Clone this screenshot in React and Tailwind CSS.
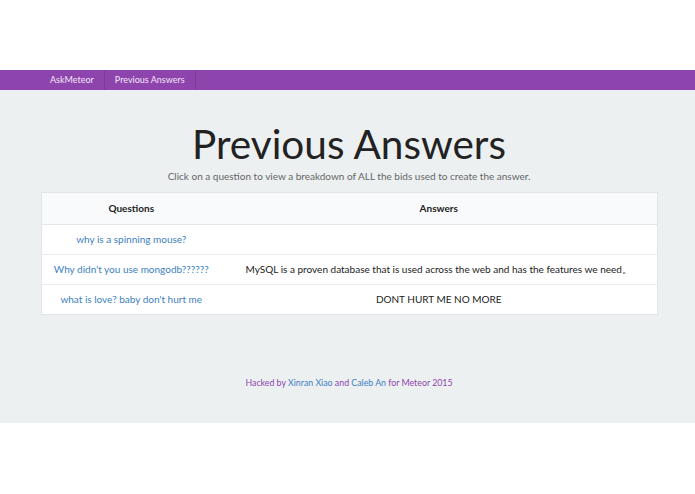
import React from 'react';

const answers = [
  { q: 'why is a spinning mouse?', a: '' },
  {
    q: "Why didn't you use mongodb??????",
    a: 'MySQL is a proven database that is used across the web and has the features we need\u3002',
  },
  { q: "what is love? baby don't hurt me", a: 'DONT HURT ME NO MORE' },
];

const App = () => {
  return (
    <div className="w-[695px] h-[494px] bg-white font-['Lato','Open_Sans',sans-serif] text-[#2c3e50]">
      <div className="h-[70px]" />

      {/* Top nav */}
      <nav className="h-[20px] bg-[#8e44ad] flex items-stretch pl-[40px] text-[9px] text-[#f3e6f8]">
        <a className="flex items-center px-[10px] border-r border-[#7d3a99]">AskMeteor</a>
        <a className="flex items-center px-[10px] border-r border-[#7d3a99]">Previous Answers</a>
      </nav>

      <main className="h-[333px] bg-[#ecf0f1] flex flex-col items-center">
        <h1 className="mt-[31px] ml-[3px] text-[40.5px] leading-[46px] text-[#222]">Previous Answers</h1>
        <p className="mt-[2px] ml-[3px] text-[10px] leading-[14px] text-[#666]">
          Click on a question to view a breakdown of ALL the bids used to create the answer.
        </p>

        <table className="mt-[9px] ml-[3px] w-[617px] bg-white border border-[#e0e5e8] text-[10px] border-collapse">
          <thead>
            <tr className="h-[32px] bg-[#f9fafb] border-b border-[#e3e7ea]">
              <th className="w-[180px] font-bold text-[#222]">Questions</th>
              <th className="font-bold text-[#222]">Answers</th>
            </tr>
          </thead>
          <tbody>
            {answers.map((row, i) => (
              <tr key={i} className="h-[30px] border-t border-[#e8ecee] first:border-t-0">
                <td className="text-center text-[#3d7fc1]">{row.q}</td>
                <td className="text-center text-[#222]">{row.a}</td>
              </tr>
            ))}
          </tbody>
        </table>

        <footer className="mt-[61px] ml-[3px] text-[8.8px] text-[#8e44ad]">
          Hacked by <span className="text-[#3d7fc1]">Xinran Xiao</span> and{' '}
          <span className="text-[#3d7fc1]">Caleb An</span> for Meteor 2015
        </footer>
      </main>
    </div>
  );
};

export default App;
